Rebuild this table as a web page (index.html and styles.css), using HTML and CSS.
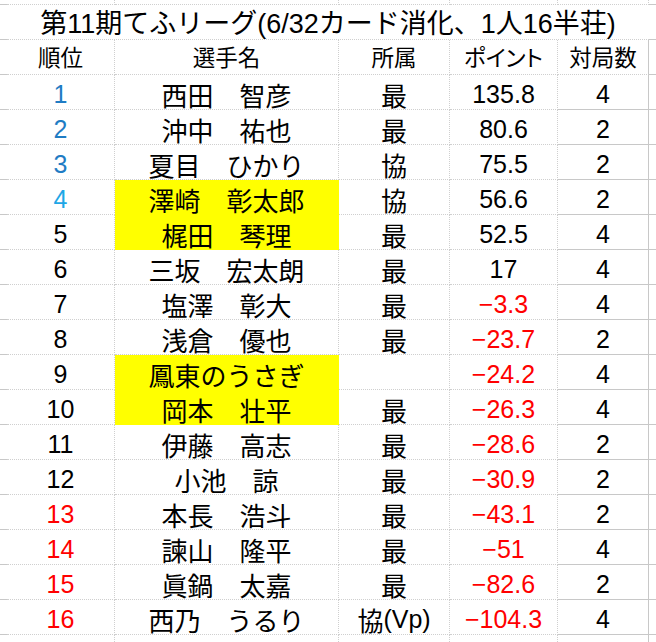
FILE: index.html
```html
<!DOCTYPE html>
<html lang="ja">
<head>
<meta charset="utf-8">
<link rel="stylesheet" href="styles.css">
</head>
<body>
<div class="sheet">
  <div class="c edge top"></div><div class="c top"></div><div class="c top"></div><div class="c top"></div><div class="c top"></div><div class="c top"></div><div class="c edge top"></div>

  <div class="c edge"></div><div class="c title">第11期てふリーグ(6/32カード消化、1人16半荘)</div><div class="c edge"></div>

  <div class="c edge"></div><div class="c hd">順位</div><div class="c hd">選手名</div><div class="c hd">所属</div><div class="c hd">ポイント</div><div class="c hd e">対局数</div><div class="c edge"></div>

  <div class="c edge"></div><div class="c num blue">1</div><div class="c name">西田　智彦</div><div class="c aff">最</div><div class="c num">135.8</div><div class="c num e">4</div><div class="c edge"></div>
  <div class="c edge"></div><div class="c num blue">2</div><div class="c name">沖中　祐也</div><div class="c aff">最</div><div class="c num">80.6</div><div class="c num e">2</div><div class="c edge"></div>
  <div class="c edge"></div><div class="c num blue">3</div><div class="c name">夏目　ひかり</div><div class="c aff">協</div><div class="c num">75.5</div><div class="c num e">2</div><div class="c edge"></div>
  <div class="c edge"></div><div class="c num sky">4</div><div class="c name hl">澤崎　彰太郎</div><div class="c aff">協</div><div class="c num">56.6</div><div class="c num e">2</div><div class="c edge"></div>
  <div class="c edge"></div><div class="c num">5</div><div class="c name hl">梶田　琴理</div><div class="c aff">最</div><div class="c num">52.5</div><div class="c num e">4</div><div class="c edge"></div>
  <div class="c edge"></div><div class="c num">6</div><div class="c name">三坂　宏太朗</div><div class="c aff">最</div><div class="c num">17</div><div class="c num e">4</div><div class="c edge"></div>
  <div class="c edge"></div><div class="c num">7</div><div class="c name">塩澤　彰大</div><div class="c aff">最</div><div class="c num red">−3.3</div><div class="c num e">4</div><div class="c edge"></div>
  <div class="c edge"></div><div class="c num">8</div><div class="c name">浅倉　優也</div><div class="c aff">最</div><div class="c num red">−23.7</div><div class="c num e">2</div><div class="c edge"></div>
  <div class="c edge"></div><div class="c num">9</div><div class="c name hl">鳳東のうさぎ</div><div class="c aff"></div><div class="c num red">−24.2</div><div class="c num e">4</div><div class="c edge"></div>
  <div class="c edge"></div><div class="c num">10</div><div class="c name hl">岡本　壮平</div><div class="c aff">最</div><div class="c num red">−26.3</div><div class="c num e">4</div><div class="c edge"></div>
  <div class="c edge"></div><div class="c num">11</div><div class="c name">伊藤　高志</div><div class="c aff">最</div><div class="c num red">−28.6</div><div class="c num e">2</div><div class="c edge"></div>
  <div class="c edge"></div><div class="c num">12</div><div class="c name">小池　諒</div><div class="c aff">最</div><div class="c num red">−30.9</div><div class="c num e">2</div><div class="c edge"></div>
  <div class="c edge"></div><div class="c num red">13</div><div class="c name">本長　浩斗</div><div class="c aff">最</div><div class="c num red">−43.1</div><div class="c num e">2</div><div class="c edge"></div>
  <div class="c edge"></div><div class="c num red">14</div><div class="c name">諫山　隆平</div><div class="c aff">最</div><div class="c num red">−51</div><div class="c num e">4</div><div class="c edge"></div>
  <div class="c edge"></div><div class="c num red">15</div><div class="c name">眞鍋　太嘉</div><div class="c aff">最</div><div class="c num red">−82.6</div><div class="c num e">2</div><div class="c edge"></div>
  <div class="c edge"></div><div class="c num red">16</div><div class="c name">西乃　うるり</div><div class="c aff">協<span class="lat">(Vp)</span></div><div class="c num red">−104.3</div><div class="c num e">4</div><div class="c edge"></div>

  <div class="c edge"></div><div class="c"></div><div class="c"></div><div class="c"></div><div class="c"></div><div class="c e"></div><div class="c edge"></div>
</div>
</body>
</html>
```

FILE: styles.css
```css
html, body {
  margin: 0;
  padding: 0;
  background: #ffffff;
  overflow: hidden;
}
body {
  width: 656px;
  height: 642px;
  font-family: "Liberation Sans", "Noto Sans CJK JP", sans-serif;
  color: #000000;
}
.sheet {
  display: grid;
  grid-template-columns: 7px 108px 224px 111px 108px 91px 7px;
  grid-template-rows: 5px;
  grid-auto-rows: 35px;
}
.c {
  box-sizing: border-box;
  border-right: 1px dotted #cfcfcf;
  border-bottom: 1px dotted #cfcfcf;
  display: flex;
  align-items: center;
  justify-content: center;
  padding-top: 5px;
  white-space: nowrap;
  line-height: 1;
}
.top {
  padding: 0;
}
.edge {
  border-right: none;
  border-bottom: 1px solid #c8c8c8;
}
.title {
  grid-column: span 5;
  font-size: 27px;
  border-right: none;
  padding-top: 4px;
}
.hd {
  font-size: 22.5px;
  padding-top: 4px;
  font-feature-settings: "palt";
}
.name {
  font-family: "Noto Sans CJK JP", sans-serif;
  font-size: 26px;
}
.aff {
  font-family: "Noto Sans CJK JP", sans-serif;
  font-size: 26px;
}
.lat {
  font-family: "Liberation Sans", sans-serif;
  font-size: 25px;
}
.num {
  font-size: 25px;
}
.e {
  border-right: 1px solid #c8c8c8;
}
.num.e {
  border-bottom: 1px solid #c8c8c8;
}
.hl {
  background: #ffff00;
  border-color: #ffff00;
}
.blue {
  color: #1f7cc4;
}
.sky {
  color: #1ea6e6;
}
.red {
  color: #ff0000;
}
```
